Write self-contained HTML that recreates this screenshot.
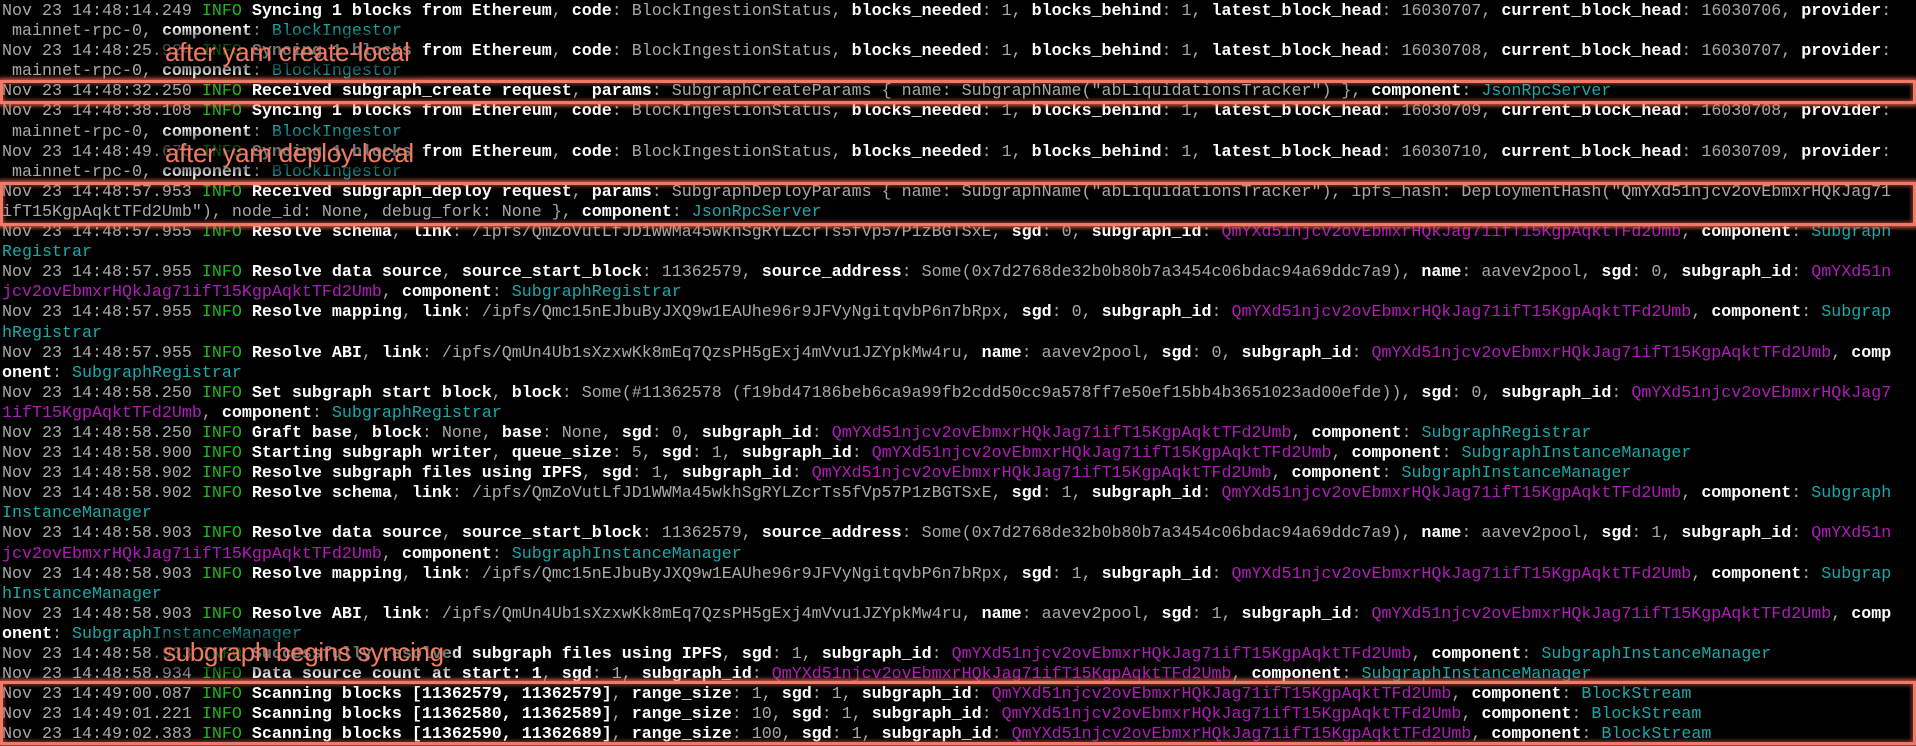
<!DOCTYPE html>
<html><head><meta charset="utf-8"><style>
html,body{margin:0;padding:0;background:#000;width:1916px;height:746px;overflow:hidden}
#t{position:absolute;left:2px;top:2px;font-family:"Liberation Mono",monospace;font-size:16.67px;line-height:20.1px;color:#a8a8a8;white-space:normal}
#t div{height:20.1px;white-space:pre;overflow:visible}
b{color:#fff;font-weight:bold}
i{font-style:normal;color:#a8a8a8}
em{font-style:normal;color:#b01cb8}
u{text-decoration:none;color:#1aa8a8}
.g{color:#1cb81c}
.box{position:absolute;left:0;width:1910px;border:3px solid #f07a66;box-shadow:0 0 4px 2px rgba(240,110,90,.8),inset 0 0 4px 1px rgba(240,110,90,.6)}
.ann{position:absolute;font-family:"Liberation Sans",sans-serif;font-size:26px;line-height:26px;color:#f07a62;background:rgba(0,0,0,.55);box-shadow:0 0 8px 6px rgba(0,0,0,.55);padding:0 2px;letter-spacing:-0.3px}
</style></head><body>
<div id="t"><div>Nov 23 14:48:14.249 <span class="g">INFO</span> <b>Syncing 1 blocks from Ethereum</b>, <b>code</b>: BlockIngestionStatus, <b>blocks_needed</b>: 1, <b>blocks_behind</b>: 1, <b>latest_block_head</b>: 16030707, <b>current_block_head</b>: 16030706, <b>provider</b>:</div><div> mainnet-rpc-0, <b>component</b>: <u>BlockIngestor</u></div><div>Nov 23 14:48:25.924 <span class="g">INFO</span> <b>Syncing 1 blocks from Ethereum</b>, <b>code</b>: BlockIngestionStatus, <b>blocks_needed</b>: 1, <b>blocks_behind</b>: 1, <b>latest_block_head</b>: 16030708, <b>current_block_head</b>: 16030707, <b>provider</b>:</div><div> mainnet-rpc-0, <b>component</b>: <u>BlockIngestor</u></div><div>Nov 23 14:48:32.250 <span class="g">INFO</span> <b>Received subgraph_create request</b>, <b>params</b>: SubgraphCreateParams { name: SubgraphName("abLiquidationsTracker") }, <b>component</b>: <u>JsonRpcServer</u></div><div>Nov 23 14:48:38.108 <span class="g">INFO</span> <b>Syncing 1 blocks from Ethereum</b>, <b>code</b>: BlockIngestionStatus, <b>blocks_needed</b>: 1, <b>blocks_behind</b>: 1, <b>latest_block_head</b>: 16030709, <b>current_block_head</b>: 16030708, <b>provider</b>:</div><div> mainnet-rpc-0, <b>component</b>: <u>BlockIngestor</u></div><div>Nov 23 14:48:49.675 <span class="g">INFO</span> <b>Syncing 1 blocks from Ethereum</b>, <b>code</b>: BlockIngestionStatus, <b>blocks_needed</b>: 1, <b>blocks_behind</b>: 1, <b>latest_block_head</b>: 16030710, <b>current_block_head</b>: 16030709, <b>provider</b>:</div><div> mainnet-rpc-0, <b>component</b>: <u>BlockIngestor</u></div><div>Nov 23 14:48:57.953 <span class="g">INFO</span> <b>Received subgraph_deploy request</b>, <b>params</b>: SubgraphDeployParams { name: SubgraphName("abLiquidationsTracker"), ipfs_hash: DeploymentHash("QmYXd51njcv2ovEbmxrHQkJag71</div><div>ifT15KgpAqktTFd2Umb"), node_id: None, debug_fork: None }, <b>component</b>: <u>JsonRpcServer</u></div><div>Nov 23 14:48:57.955 <span class="g">INFO</span> <b>Resolve schema</b>, <b>link</b>: /ipfs/QmZoVutLfJD1WWMa45wkhSgRYLZcrTs5fVp57P1zBGTSxE, <b>sgd</b>: 0, <b>subgraph_id</b>: <em>QmYXd51njcv2ovEbmxrHQkJag71ifT15KgpAqktTFd2Umb</em>, <b>component</b>: <u>Subgraph</u></div><div><u>Registrar</u></div><div>Nov 23 14:48:57.955 <span class="g">INFO</span> <b>Resolve data source</b>, <b>source_start_block</b>: 11362579, <b>source_address</b>: Some(0x7d2768de32b0b80b7a3454c06bdac94a69ddc7a9), <b>name</b>: aavev2pool, <b>sgd</b>: 0, <b>subgraph_id</b>: <em>QmYXd51n</em></div><div><em>jcv2ovEbmxrHQkJag71ifT15KgpAqktTFd2Umb</em>, <b>component</b>: <u>SubgraphRegistrar</u></div><div>Nov 23 14:48:57.955 <span class="g">INFO</span> <b>Resolve mapping</b>, <b>link</b>: /ipfs/Qmc15nEJbuByJXQ9w1EAUhe96r9JFVyNgitqvbP6n7bRpx, <b>sgd</b>: 0, <b>subgraph_id</b>: <em>QmYXd51njcv2ovEbmxrHQkJag71ifT15KgpAqktTFd2Umb</em>, <b>component</b>: <u>Subgrap</u></div><div><u>hRegistrar</u></div><div>Nov 23 14:48:57.955 <span class="g">INFO</span> <b>Resolve ABI</b>, <b>link</b>: /ipfs/QmUn4Ub1sXzxwKk8mEq7QzsPH5gExj4mVvu1JZYpkMw4ru, <b>name</b>: aavev2pool, <b>sgd</b>: 0, <b>subgraph_id</b>: <em>QmYXd51njcv2ovEbmxrHQkJag71ifT15KgpAqktTFd2Umb</em>, <b>comp</b></div><div><b>onent</b>: <u>SubgraphRegistrar</u></div><div>Nov 23 14:48:58.250 <span class="g">INFO</span> <b>Set subgraph start block</b>, <b>block</b>: Some(#11362578 (f19bd47186beb6ca9a99fb2cdd50cc9a578ff7e50ef15bb4b3651023ad00efde)), <b>sgd</b>: 0, <b>subgraph_id</b>: <em>QmYXd51njcv2ovEbmxrHQkJag7</em></div><div><em>1ifT15KgpAqktTFd2Umb</em>, <b>component</b>: <u>SubgraphRegistrar</u></div><div>Nov 23 14:48:58.250 <span class="g">INFO</span> <b>Graft base</b>, <b>block</b>: None, <b>base</b>: None, <b>sgd</b>: 0, <b>subgraph_id</b>: <em>QmYXd51njcv2ovEbmxrHQkJag71ifT15KgpAqktTFd2Umb</em>, <b>component</b>: <u>SubgraphRegistrar</u></div><div>Nov 23 14:48:58.900 <span class="g">INFO</span> <b>Starting subgraph writer</b>, <b>queue_size</b>: 5, <b>sgd</b>: 1, <b>subgraph_id</b>: <em>QmYXd51njcv2ovEbmxrHQkJag71ifT15KgpAqktTFd2Umb</em>, <b>component</b>: <u>SubgraphInstanceManager</u></div><div>Nov 23 14:48:58.902 <span class="g">INFO</span> <b>Resolve subgraph files using IPFS</b>, <b>sgd</b>: 1, <b>subgraph_id</b>: <em>QmYXd51njcv2ovEbmxrHQkJag71ifT15KgpAqktTFd2Umb</em>, <b>component</b>: <u>SubgraphInstanceManager</u></div><div>Nov 23 14:48:58.902 <span class="g">INFO</span> <b>Resolve schema</b>, <b>link</b>: /ipfs/QmZoVutLfJD1WWMa45wkhSgRYLZcrTs5fVp57P1zBGTSxE, <b>sgd</b>: 1, <b>subgraph_id</b>: <em>QmYXd51njcv2ovEbmxrHQkJag71ifT15KgpAqktTFd2Umb</em>, <b>component</b>: <u>Subgraph</u></div><div><u>InstanceManager</u></div><div>Nov 23 14:48:58.903 <span class="g">INFO</span> <b>Resolve data source</b>, <b>source_start_block</b>: 11362579, <b>source_address</b>: Some(0x7d2768de32b0b80b7a3454c06bdac94a69ddc7a9), <b>name</b>: aavev2pool, <b>sgd</b>: 1, <b>subgraph_id</b>: <em>QmYXd51n</em></div><div><em>jcv2ovEbmxrHQkJag71ifT15KgpAqktTFd2Umb</em>, <b>component</b>: <u>SubgraphInstanceManager</u></div><div>Nov 23 14:48:58.903 <span class="g">INFO</span> <b>Resolve mapping</b>, <b>link</b>: /ipfs/Qmc15nEJbuByJXQ9w1EAUhe96r9JFVyNgitqvbP6n7bRpx, <b>sgd</b>: 1, <b>subgraph_id</b>: <em>QmYXd51njcv2ovEbmxrHQkJag71ifT15KgpAqktTFd2Umb</em>, <b>component</b>: <u>Subgrap</u></div><div><u>hInstanceManager</u></div><div>Nov 23 14:48:58.903 <span class="g">INFO</span> <b>Resolve ABI</b>, <b>link</b>: /ipfs/QmUn4Ub1sXzxwKk8mEq7QzsPH5gExj4mVvu1JZYpkMw4ru, <b>name</b>: aavev2pool, <b>sgd</b>: 1, <b>subgraph_id</b>: <em>QmYXd51njcv2ovEbmxrHQkJag71ifT15KgpAqktTFd2Umb</em>, <b>comp</b></div><div><b>onent</b>: <u>SubgraphInstanceManager</u></div><div>Nov 23 14:48:58.933 <span class="g">INFO</span> <b>Successfully resolved subgraph files using IPFS</b>, <b>sgd</b>: 1, <b>subgraph_id</b>: <em>QmYXd51njcv2ovEbmxrHQkJag71ifT15KgpAqktTFd2Umb</em>, <b>component</b>: <u>SubgraphInstanceManager</u></div><div>Nov 23 14:48:58.934 <span class="g">INFO</span> <b>Data source count at start: 1</b>, <b>sgd</b>: 1, <b>subgraph_id</b>: <em>QmYXd51njcv2ovEbmxrHQkJag71ifT15KgpAqktTFd2Umb</em>, <b>component</b>: <u>SubgraphInstanceManager</u></div><div>Nov 23 14:49:00.087 <span class="g">INFO</span> <b>Scanning blocks [11362579, 11362579]</b>, <b>range_size</b>: 1, <b>sgd</b>: 1, <b>subgraph_id</b>: <em>QmYXd51njcv2ovEbmxrHQkJag71ifT15KgpAqktTFd2Umb</em>, <b>component</b>: <u>BlockStream</u></div><div>Nov 23 14:49:01.221 <span class="g">INFO</span> <b>Scanning blocks [11362580, 11362589]</b>, <b>range_size</b>: 10, <b>sgd</b>: 1, <b>subgraph_id</b>: <em>QmYXd51njcv2ovEbmxrHQkJag71ifT15KgpAqktTFd2Umb</em>, <b>component</b>: <u>BlockStream</u></div><div>Nov 23 14:49:02.383 <span class="g">INFO</span> <b>Scanning blocks [11362590, 11362689]</b>, <b>range_size</b>: 100, <b>sgd</b>: 1, <b>subgraph_id</b>: <em>QmYXd51njcv2ovEbmxrHQkJag71ifT15KgpAqktTFd2Umb</em>, <b>component</b>: <u>BlockStream</u></div></div>
<div class="box" style="top:80px;height:18px"></div>
<div class="box" style="top:182px;height:38px"></div>
<div class="box" style="top:681px;height:58px"></div>
<div class="ann" style="left:163px;top:39px">after yarn create-local</div>
<div class="ann" style="left:163px;top:140px">after yarn deploy-local</div>
<div class="ann" style="left:161px;top:639px">subgraph begins syncing</div>
</body></html>
